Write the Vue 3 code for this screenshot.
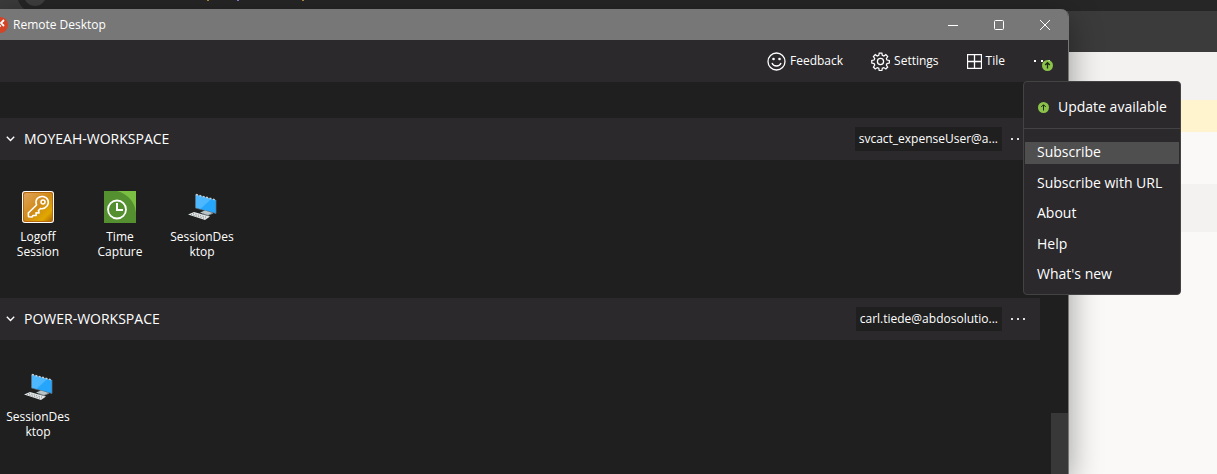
<script setup>
import { ref } from 'vue'

const groups = [
  {
    name: 'MOYEAH-WORKSPACE',
    account: 'svcact_expenseUser@a...',
    apps: [
      { title: 'Logoff Session', icon: 'key' },
      { title: 'Time Capture', icon: 'clock' },
      { title: 'SessionDesktop', icon: 'pc' },
    ],
  },
  {
    name: 'POWER-WORKSPACE',
    account: 'carl.tiede@abdosolutio...',
    apps: [{ title: 'SessionDesktop', icon: 'pc' }],
  },
]

const menuItems = ['Subscribe', 'Subscribe with URL', 'About', 'Help', "What's new"]
const current = ref('Subscribe')
</script>

<template>
  <div class="screen">
    <div class="backdrop">
      <div class="backdrop__tabs">
        <svg width="320" height="11" viewBox="0 0 320 11">
          <path d="M0 0H18Q20 7 27 11H0Z" fill="#3b3b3b" />
          <circle cx="35" cy="-5" r="11" fill="#3f3f3f" />
          <path d="M207 0h2v1h-2zM302 0h2v1h-2z" fill="#b08d45" />
          <path d="M237 0h2v1h-2z" fill="#8b7fd0" />
        </svg>
      </div>
      <div class="backdrop__bar"></div>
      <div class="backdrop__row backdrop__row--grey"></div>
      <div class="backdrop__row backdrop__row--notice"></div>
      <div class="backdrop__row"></div>
      <div class="backdrop__row backdrop__row--grey"></div>
    </div>

    <div class="window">
      <header class="titlebar">
        <svg class="titlebar__logo" width="8" height="16" viewBox="0 0 8 16">
          <circle cx="0" cy="8" r="8" fill="#d44426" />
          <path d="M4 3L1 6L4 9M-3 6L0 9L-3 12" fill="none" stroke="#fff" stroke-width="1.8" />
        </svg>
        <span class="titlebar__title">Remote Desktop</span>
        <button type="button" class="titlebar__btn" aria-label="Minimize">
          <svg width="12" height="12" viewBox="0 0 12 12"><path d="M1 6.5h10" /></svg>
        </button>
        <button type="button" class="titlebar__btn" aria-label="Maximize">
          <svg width="12" height="12" viewBox="0 0 12 12">
            <rect x="1.5" y="1.5" width="9" height="9" rx="1" />
          </svg>
        </button>
        <button type="button" class="titlebar__btn" aria-label="Close">
          <svg width="12" height="12" viewBox="0 0 12 12"><path d="M1 1l10 10M11 1L1 11" /></svg>
        </button>
      </header>

      <nav class="toolbar">
        <button type="button" class="tool">
          <svg width="19" height="19" viewBox="0 0 19 19">
            <circle cx="9.5" cy="9.5" r="8.5" />
            <path d="M5 11c.7 2 2.400 3 4.500 3s3.800-1 4.500-3" />
            <circle class="solid" cx="6.500" cy="7" r="1.300" />
            <circle class="solid" cx="12.500" cy="7" r="1.300" />
          </svg>
          Feedback
        </button>
        <button type="button" class="tool">
          <svg width="19" height="19" viewBox="0 0 24 24">
            <path
              stroke-width="1.600"
              d="M10.300 1.500h3.400l.6 3 1.900.8 2.600-1.700 2.400 2.400-1.700 2.600.8 1.900 3 .6v3.400l-3 .6-.8 1.900 1.700 2.600-2.400 2.400-2.600-1.700-1.900.8-.6 3h-3.400l-.6-3-1.900-.8-2.600 1.700-2.400-2.400 1.700-2.600-.8-1.900-3-.6v-3.400l3-.6.8-1.900-1.700-2.600 2.400-2.400 2.600 1.700 1.900-.8z"
              transform="translate(.3 -.2) scale(.98)"
            />
            <circle cx="12" cy="12" r="3.900" stroke-width="1.600" />
          </svg>
          Settings
        </button>
        <button type="button" class="tool">
          <svg width="15" height="15" viewBox="0 0 15 15">
            <path d="M.5.500h14v14H.5zM7.500.500v14M.5 7.500h14" />
          </svg>
          Tile
        </button>
        <button type="button" class="tool tool--more" aria-label="More">
          <svg width="19" height="3" viewBox="0 0 19 3">
            <path class="solid" d="M1 0h2v2H1zM8 0h2v2H8zM15 0h2v2h-2z" />
          </svg>
          <svg class="tool__badge" width="11" height="11" viewBox="0 0 11 11">
            <circle cx="5.500" cy="5.500" r="5.500" fill="#8bc34a" stroke="none" />
            <path d="M5.500 8.500V3M3.200 5L5.500 2.700L7.800 5" stroke="#1f2a14" />
          </svg>
        </button>
      </nav>

      <main class="content">
        <div class="groups">
          <section v-for="g in groups" :key="g.name" class="group">
            <div class="group__head">
              <button type="button" class="group__toggle">
                <svg width="9" height="6" viewBox="0 0 9 6">
                  <path d="M.8.800L4.500 4.500L8.200.8" />
                </svg>
                {{ g.name }}
              </button>
              <span class="group__account">{{ g.account }}</span>
              <button type="button" class="group__more" aria-label="Workspace options">
                <svg width="14" height="2" viewBox="0 0 14 2">
                  <path d="M0 0h2v2H0zM6 0h2v2H6zM12 0h2v2h-2z" />
                </svg>
              </button>
            </div>
            <div class="apps">
              <button v-for="a in g.apps" :key="a.title" type="button" class="app">
                <svg v-if="a.icon === 'key'" width="32" height="32" viewBox="0 0 32 32">
                  <defs>
                    <linearGradient id="gold" x1="0" y1="0" x2="1" y2="1">
                      <stop offset="0" stop-color="#e0a45c" />
                      <stop offset=".5" stop-color="#d08a16" />
                      <stop offset=".8" stop-color="#e0a800" />
                      <stop offset="1" stop-color="#b06a08" />
                    </linearGradient>
                  </defs>
                  <rect width="32" height="32" rx="3" fill="#fff" />
                  <rect x="1" y="1" width="30" height="30" rx="2" fill="#b8690c" />
                  <rect x="2" y="2" width="28" height="28" rx="2" fill="url(#gold)" />
                  <path
                    d="M14.500 14C12.500 8 17 5 21 5.500C25.500 6 28 11 25 15C23 17.500 20.500 18 18.500 17.500L16.500 19.500L17 22L14 21.800L14.200 24.500L11 24.500L10 26L6.500 25.800L6.300 22Z"
                    fill="none"
                    stroke="#fff"
                    stroke-width="1.600"
                    stroke-linejoin="round"
                  />
                  <circle cx="21" cy="11" r="2" fill="none" stroke="#fff" stroke-width="1.500" />
                </svg>
                <svg v-else-if="a.icon === 'clock'" width="32" height="32" viewBox="0 0 32 32">
                  <rect width="32" height="32" fill="#54902f" />
                  <path d="M13 0H32V22C31 11 24 3 13 0Z" fill="#7bbf42" />
                  <circle cx="13" cy="18.500" r="9" fill="none" stroke="#fff" stroke-width="1.800" />
                  <path d="M13 12v7h6" fill="none" stroke="#fff" stroke-width="2" />
                </svg>
                <svg v-else width="32" height="32" viewBox="0 0 32 32">
                  <defs>
                    <linearGradient id="glass" x1="0" y1="0" x2="1" y2="1">
                      <stop offset=".48" stop-color="#4db8ff" />
                      <stop offset=".52" stop-color="#25a5fb" />
                    </linearGradient>
                  </defs>
                  <path d="M9.500 3.500L30 9V22.500L9.500 17Z" fill="url(#glass)" />
                  <path d="M9.500 3.500V17L30 22.500V9" fill="none" stroke="#5b7484" stroke-width=".7" />
                  <path d="M10 3.500L30 9" stroke="#c5cdd1" stroke-width="1.500" stroke-dasharray="2 1.500" />
                  <path d="M14 21.500L19 19.500L27 22L22 24.500Z" fill="#b9c4c7" />
                  <path d="M16 22.500L22 24.300L27 22.300" fill="none" stroke="#7b898d" stroke-width=".8" />
                  <path d="M2 23.500L8 21L24 25.500L19 29Z" fill="#dfe3e4" />
                  <path
                    d="M5 23.500L19.500 27.700M7 22.500L21 26.500"
                    fill="none"
                    stroke="#85898b"
                    stroke-dasharray="1 1.500"
                  />
                </svg>
                <span class="app__title">{{ a.title }}</span>
              </button>
            </div>
          </section>
        </div>
        <div class="scrollbar"><div class="scrollbar__thumb"></div></div>
      </main>

      <div class="menu" role="menu">
        <button type="button" class="menu__update" role="menuitem">
          <svg width="11" height="11" viewBox="0 0 11 11">
            <circle cx="5.500" cy="5.500" r="5.500" fill="#8bc34a" />
            <path d="M5.500 8.500V3M3.200 5L5.500 2.700L7.800 5" fill="none" stroke="#1f2a14" />
          </svg>
          Update available
        </button>
        <div class="menu__list">
          <button
            v-for="m in menuItems"
            :key="m"
            type="button"
            role="menuitem"
            class="menu__item"
            :class="{ 'menu__item--active': m === current }"
            @mouseenter="current = m"
          >
            {{ m }}
          </button>
        </div>
      </div>
    </div>
  </div>
</template>

<style>
body {
  margin: 0;
  background: #faf9f8;
}
</style>

<style scoped>
.screen {
  position: relative;
  min-height: 100vh;
  overflow: hidden;
  font-family: 'Segoe UI', 'Open Sans', 'Noto Sans', sans-serif;
  font-size: 12px;
  line-height: 16px;
  color: #fff;
}
button {
  margin: 0;
  padding: 0;
  border: none;
  background: transparent;
  color: inherit;
  font: inherit;
  cursor: pointer;
}
svg {
  display: block;
  flex: none;
}
.backdrop__tabs {
  height: 11px;
  background: #262626;
}
.backdrop__bar {
  height: 41px;
  background: #3b3b3b;
}
.backdrop__row {
  height: 52px;
  background: #faf9f8;
}
.backdrop__row--grey {
  height: 48px;
  background: #f3f2f1;
}
.backdrop__row--notice {
  height: 32px;
  background: #fff4ce;
}
.window {
  position: absolute;
  top: 9px;
  right: 148px;
  bottom: 0;
  left: 0;
  display: flex;
  flex-direction: column;
  border-right: 1px solid #777;
  border-top-right-radius: 8px;
  background: #1f1f1f;
  box-shadow: 0 8px 32px rgba(0, 0, 0, 0.4);
}
.titlebar {
  display: flex;
  align-items: center;
  height: 31px;
  border-top-right-radius: 7px;
  background: #777;
}
.titlebar__title {
  flex: 1;
  padding-left: 5px;
}
.titlebar__btn {
  display: flex;
  align-items: center;
  justify-content: center;
  width: 46px;
  height: 31px;
}
.titlebar__btn svg,
.tool svg {
  fill: none;
  stroke: #fff;
}
.toolbar {
  display: flex;
  justify-content: flex-end;
  height: 42px;
  padding-right: 2px;
  background: #2b292c;
}
.tool {
  display: flex;
  align-items: center;
  gap: 4px;
  padding: 0 14px;
}
.tool svg {
  stroke-width: 1.3;
}
.tool .solid {
  fill: #fff;
  stroke: none;
}
.tool--more {
  position: relative;
}
.tool .tool__badge {
  position: absolute;
  right: 13px;
  bottom: 11px;
}
.content {
  flex: 1;
  display: flex;
  min-height: 0;
}
.groups {
  flex: 1;
  padding: 36px 11px 0 0;
  overflow: hidden;
}
.group__head {
  display: flex;
  align-items: center;
  height: 42px;
  background: #2b292c;
}
.group__toggle {
  display: flex;
  align-items: center;
  gap: 9px;
  flex: 1;
  padding-left: 6px;
  font-size: 14px;
}
.group__toggle svg {
  fill: none;
  stroke: #fff;
  stroke-width: 1.4;
}
.group__account {
  padding: 4px;
  background: #1f1f1f;
}
.group__more {
  display: flex;
  align-items: center;
  height: 24px;
  padding: 0 15px 0 9px;
}
.group__more svg {
  fill: #ddd;
}
.apps {
  display: flex;
  gap: 6px;
  min-height: 107px;
  padding-top: 31px;
}
.app {
  display: flex;
  flex-direction: column;
  align-items: center;
  gap: 6px;
  width: 76px;
}
.app__title {
  width: 64px;
  line-height: 15px;
  overflow-wrap: anywhere;
}
.scrollbar {
  display: flex;
  align-items: flex-end;
  width: 17px;
}
.scrollbar__thumb {
  width: 17px;
  height: 61px;
  background: #383838;
}
.menu {
  position: absolute;
  top: 72px;
  right: -113px;
  width: 156px;
  border: 1px solid #434343;
  border-radius: 4px;
  background: #2b292c;
  font-size: 14px;
}
.menu__update {
  display: flex;
  align-items: center;
  gap: 9px;
  width: 100%;
  height: 47px;
  padding: 4px 0 0 14px;
  border-bottom: 1px solid #434343;
  white-space: nowrap;
}
.menu__list {
  display: flex;
  flex-direction: column;
  justify-content: space-between;
  height: 144px;
  padding: 13px 1px 8px;
}
.menu__item {
  height: 22px;
  padding: 0 12px 2px;
  text-align: left;
  white-space: nowrap;
}
.menu__item--active {
  background: #4f4f4f;
}
</style>
